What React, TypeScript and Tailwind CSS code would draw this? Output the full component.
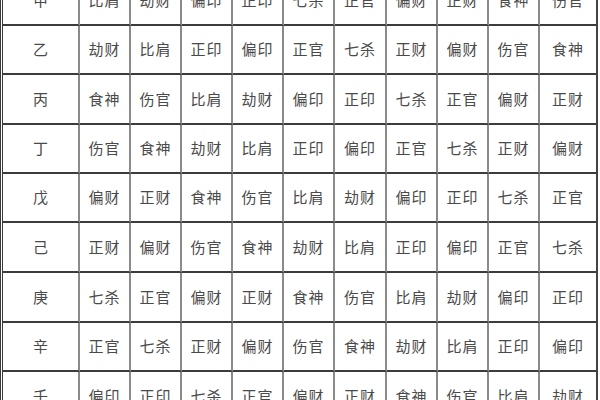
import React from "react";

const rows: { stem: string; h: string; gods: string[] }[] = [
  { stem: "甲", h: "h-[50px]", gods: ["比肩", "劫财", "偏印", "正印", "七杀", "正官", "偏财", "正财", "食神", "伤官"] },
  { stem: "乙", h: "h-[49px]", gods: ["劫财", "比肩", "正印", "偏印", "正官", "七杀", "正财", "偏财", "伤官", "食神"] },
  { stem: "丙", h: "h-[50px]", gods: ["食神", "伤官", "比肩", "劫财", "偏印", "正印", "七杀", "正官", "偏财", "正财"] },
  { stem: "丁", h: "h-[49px]", gods: ["伤官", "食神", "劫财", "比肩", "正印", "偏印", "正官", "七杀", "正财", "偏财"] },
  { stem: "戊", h: "h-[49px]", gods: ["偏财", "正财", "食神", "伤官", "比肩", "劫财", "偏印", "正印", "七杀", "正官"] },
  { stem: "己", h: "h-[50px]", gods: ["正财", "偏财", "伤官", "食神", "劫财", "比肩", "正印", "偏印", "正官", "七杀"] },
  { stem: "庚", h: "h-[50px]", gods: ["七杀", "正官", "偏财", "正财", "食神", "伤官", "比肩", "劫财", "偏印", "正印"] },
  { stem: "辛", h: "h-[49px]", gods: ["正官", "七杀", "正财", "偏财", "伤官", "食神", "劫财", "比肩", "正印", "偏印"] },
  { stem: "壬", h: "h-[50px]", gods: ["偏印", "正印", "七杀", "正官", "偏财", "正财", "食神", "伤官", "比肩", "劫财"] },
];

const widths = [
  "w-[51px]",
  "w-[51px]",
  "w-[51px]",
  "w-[51px]",
  "w-[51px]",
  "w-[52px]",
  "w-[51px]",
  "w-[51px]",
  "w-[51px]",
  "w-[58px]",
];

export default function App() {
  return (
    <div
      className="w-[600px] h-[400px] overflow-hidden bg-white"
      style={{ fontFamily: '"Noto Sans CJK SC", "Noto Sans", sans-serif' }}
    >
      <div className="mt-[-24px] w-[598px] border-l-[3px] border-double border-l-[#3a3a3a] flex flex-col">
        {rows.map((r) => (
          <div key={r.stem} className={`flex ${r.h} shrink-0`}>
            <div className="w-[77px] shrink-0 flex items-center justify-center border-r-2 border-r-[#8a8a8a] border-b-2 border-b-[#3c3c3c] text-[15px] text-[#4a4a4a]">
              {r.stem}
            </div>
            {r.gods.map((g, i) => (
              <div
                key={i}
                className={`${widths[i]} shrink-0 flex items-center justify-center border-b-2 border-b-[#3c3c3c] border-r-2 ${
                  i === 9 ? "border-r-[#444444]" : "border-r-[#8a8a8a]"
                } text-[15px] text-[#4a4a4a] tracking-[1px]`}
              >
                {g}
              </div>
            ))}
          </div>
        ))}
      </div>
    </div>
  );
}
